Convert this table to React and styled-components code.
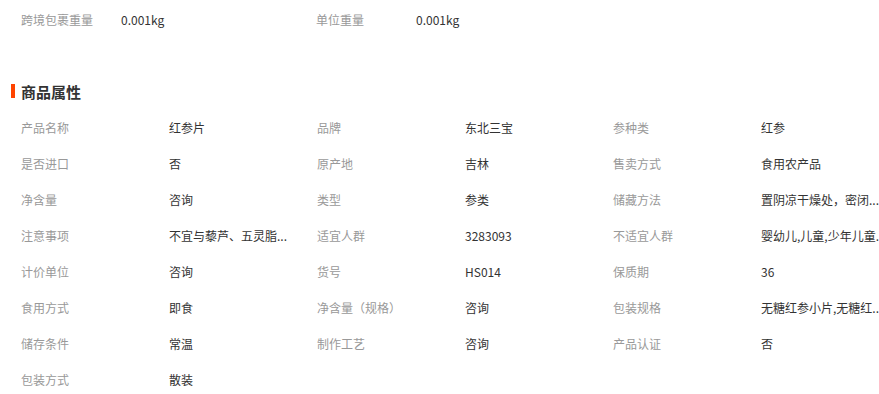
import styled, { createGlobalStyle } from "styled-components";

const GlobalStyle = createGlobalStyle`
  body {
    margin: 0;
    background: #fff;
    overflow: hidden;
    font-family: "Noto Sans CJK SC", "Liberation Sans", sans-serif;
  }
`;

const Page = styled.div`
  width: 900px;
  padding-top: 2px;
`;

const TopRow = styled.div`
  display: grid;
  grid-template-columns: 100px 195px 100px 195px;
  padding-left: 21px;
  height: 36px;
  line-height: 36px;
  font-size: 12px;
`;

const Heading = styled.h3`
  display: flex;
  align-items: center;
  gap: 6px;
  margin: 43px 0 9px;
  padding-left: 11px;
  height: 20px;
  font-size: 15px;
  font-weight: bold;
  color: #333;

  &::before {
    content: "";
    width: 4px;
    height: 14px;
    background: #ff4400;
  }
`;

const Grid = styled.div`
  display: grid;
  grid-template-columns: repeat(6, 148px);
  padding-left: 21px;
  font-size: 12px;
`;

const Label = styled.div`
  height: 36px;
  line-height: 36px;
  color: #999;
  white-space: nowrap;
`;

const Value = styled.div`
  height: 36px;
  line-height: 36px;
  color: #333;
  white-space: nowrap;
`;

const attrs = [
  ["产品名称", "红参片"],
  ["品牌", "东北三宝"],
  ["参种类", "红参"],
  ["是否进口", "否"],
  ["原产地", "吉林"],
  ["售卖方式", "食用农产品"],
  ["净含量", "咨询"],
  ["类型", "参类"],
  ["储藏方法", "置阴凉干燥处，密闭..."],
  ["注意事项", "不宜与藜芦、五灵脂..."],
  ["适宜人群", "3283093"],
  ["不适宜人群", "婴幼儿,儿童,少年儿童..."],
  ["计价单位", "咨询"],
  ["货号", "HS014"],
  ["保质期", "36"],
  ["食用方式", "即食"],
  ["净含量（规格）", "咨询"],
  ["包装规格", "无糖红参小片,无糖红..."],
  ["储存条件", "常温"],
  ["制作工艺", "咨询"],
  ["产品认证", "否"],
  ["包装方式", "散装"],
];

const App = () => {
  return (
    <Page>
      <GlobalStyle />
      <TopRow>
        <Label>跨境包裹重量</Label>
        <Value>0.001kg</Value>
        <Label>单位重量</Label>
        <Value>0.001kg</Value>
      </TopRow>
      <Heading>商品属性</Heading>
      <Grid>
        {attrs.map(([k, v]) => [
          <Label key={k}>{k}</Label>,
          <Value key={k + "-v"}>{v}</Value>,
        ])}
      </Grid>
    </Page>
  );
};

export default App;
